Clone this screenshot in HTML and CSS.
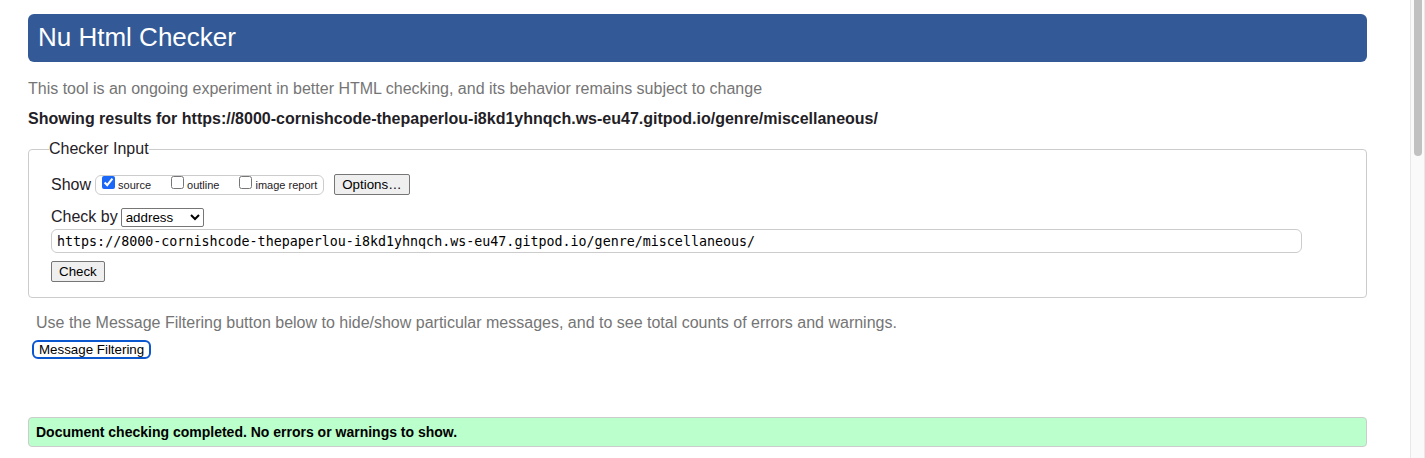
FILE: index.html
```html
<!DOCTYPE html>
<html lang="en">
<head>
<meta charset="utf-8">
<title>Nu Html Checker</title>
<link rel="stylesheet" href="styles.css">
</head>
<body class="page">
<main class="content">
  <h1 class="banner">Nu Html Checker</h1>
  <p class="note">This tool is an ongoing experiment in better HTML checking, and its behavior remains subject to change</p>
  <h2 class="results-title">Showing results for https://8000-cornishcode-thepaperlou-i8kd1yhnqch.ws-eu47.gitpod.io/genre/miscellaneous/</h2>
  <form>
    <fieldset class="checker">
      <legend class="checker-legend">Checker Input</legend>
      <div class="row show-row">
        <span>Show</span>
        <div class="options">
          <label class="option"><input class="tick" type="checkbox" checked>source</label>
          <label class="option"><input class="tick" type="checkbox">outline</label>
          <label class="option"><input class="tick" type="checkbox">image report</label>
        </div>
        <button class="button more" type="button">Options…</button>
      </div>
      <div class="row method-row">
        <label for="method">Check by</label>
        <select class="method" id="method">
          <option>address</option>
          <option>file upload</option>
          <option>text input</option>
        </select>
      </div>
      <input class="address" type="text" aria-label="Address" spellcheck="false" value="https://8000-cornishcode-thepaperlou-i8kd1yhnqch.ws-eu47.gitpod.io/genre/miscellaneous/">
      <button class="button" type="button">Check</button>
    </fieldset>
  </form>
  <section class="filtering">
    <p class="filter-note">Use the Message Filtering button below to hide/show particular messages, and to see total counts of errors and warnings.</p>
    <button class="filter-button" type="button">Message Filtering</button>
  </section>
  <p class="success">Document checking completed. No errors or warnings to show.</p>
</main>
<div class="scroll-track" aria-hidden="true"><div class="scroll-thumb"></div></div>
</body>
</html>
```

FILE: styles.css
```css
* {
  box-sizing: border-box;
}

.page {
  display: flex;
  min-height: 100vh;
  margin: 0;
  background: #fff;
  color: #1f2126;
  font-family: "Liberation Sans", Arial, sans-serif;
  font-size: 16px;
  line-height: 20px;
}

.content {
  flex: 1;
  min-width: 0;
  padding: 14px 43px 10px 28px;
}

.banner {
  margin: 0 0 17px;
  padding: 7px 10px 9px;
  border-radius: 6px;
  background: #335a96;
  color: #fff;
  font-size: 26px;
  font-weight: 400;
  line-height: 32px;
}

.note {
  margin: 0 0 10px;
  color: #757575;
}

.results-title {
  margin: 0 0 10px;
  font-size: 16px;
  overflow-wrap: anywhere;
}

.checker {
  min-width: 0;
  margin: 0;
  padding: 15px 64px 15px 22px;
  border: 1px solid #ccc;
  border-radius: 4px;
}

.checker-legend {
  margin-left: -2px;
  padding: 0;
}

.row {
  display: flex;
  flex-wrap: wrap;
  align-items: center;
  gap: 4px;
}

.show-row {
  margin-bottom: 12px;
}

.method-row {
  gap: 3px;
}

.options {
  display: flex;
  height: 20px;
  padding: 0 6px;
  gap: 20px;
  border: 1px solid #ccc;
  border-radius: 6px;
}

.option {
  display: flex;
  gap: 3px;
  font-size: 11px;
  line-height: 18px;
}

.tick {
  width: 13px;
  height: 13px;
  margin: 0;
  accent-color: #1a67f8;
}

.button {
  height: 21px;
  padding: 0 7px;
  border: 1px solid #767676;
  border-radius: 2px;
  background: #efefef;
  color: #000;
  font-family: inherit;
}

.more {
  margin-left: 6px;
}

.method {
  width: 83px;
  height: 19px;
  border: 1px solid #767676;
  border-radius: 2px;
  background: #fff;
  color: #000;
  font-family: inherit;
}

.address {
  display: block;
  width: 100%;
  height: 24px;
  margin: 2px 0 8px;
  padding: 0 5px;
  border: 1px solid #ccc;
  border-radius: 6px;
  color: #000;
  font-family: "DejaVu Sans Mono", monospace;
}

.filtering {
  margin: 15px 0 58px;
  padding: 0 4px;
}

.filter-note {
  margin: 0 0 7px;
  padding: 0 4px;
  color: #757575;
}

.filter-button {
  display: block;
  height: 19px;
  padding: 0 5px;
  border: 2px solid #0b57d0;
  border-radius: 6px;
  background: #fff;
  color: #000;
  font-family: inherit;
}

.success {
  margin: 0;
  padding: 5px 7px;
  border: 1px solid #ccc;
  border-radius: 4px;
  background: #bfc;
  color: #000;
  font-size: 14px;
  font-weight: 700;
  line-height: 18px;
}

.scroll-track {
  width: 15px;
  padding: 0 2px 0 3px;
  border: solid #e8e8e8;
  border-width: 0 1px;
  background: #fafafa;
}

.scroll-thumb {
  width: 8px;
  height: 156px;
  border-radius: 0 0 4px 4px;
  background: #c1c1c1;
}
```
